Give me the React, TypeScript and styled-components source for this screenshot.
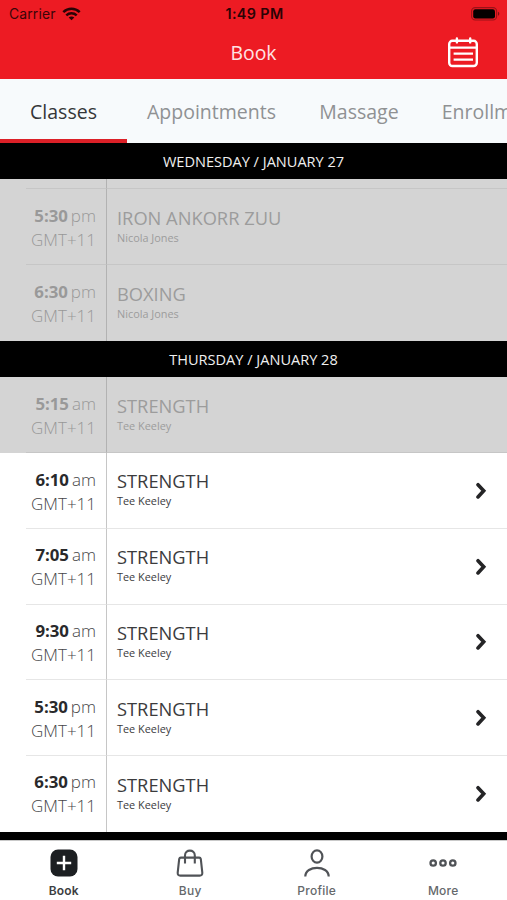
import React from "react";
import styled, { createGlobalStyle } from "styled-components";

const GlobalStyle = createGlobalStyle`
  * { box-sizing: border-box; }
  html, body { margin: 0; padding: 0; background: #fff; }
  body { font-family: "Open Sans", "Noto Sans", sans-serif; overflow: hidden; }
`;

const Screen = styled.div`
  width: 507px;
  height: 900px;
  display: flex;
  flex-direction: column;
  overflow: hidden;
  background: #fff;
`;

const Top = styled.header`
  flex: none;
  height: 79.2px;
  background: #ed1b23;
`;

const StatusBar = styled.div`
  height: 27px;
  padding: 0 7px 0 9px;
  display: grid;
  grid-template-columns: 1fr auto 1fr;
  align-items: center;
  font-family: Inter, sans-serif;
  font-size: 13.9px;
  line-height: 28px;
  color: #3a0508;
`;

const Carrier = styled.div`
  display: flex;
  align-items: center;
  gap: 6px;
  letter-spacing: 0.16px;
`;

const Clock = styled.div`
  font-weight: 600;
  font-size: 14.3px;
  color: #2a0305;
  letter-spacing: 0.4px;
`;

const BatterySlot = styled.div`
  display: flex;
  justify-content: flex-end;
`;

const NavBar = styled.div`
  height: 52px;
  display: grid;
  grid-template-columns: 1fr auto 1fr;
  align-items: center;
  padding: 0 28px;
`;

const NavTitle = styled.h1`
  grid-column: 2;
  margin: 0;
  font-size: 19.4px;
  font-weight: 400;
  line-height: 52px;
  color: #ffe3e3;
`;

const CalendarButton = styled.div`
  display: flex;
  justify-content: flex-end;
`;

const Tabs = styled.nav`
  flex: none;
  height: 63.5px;
  display: flex;
  background: #f7fafc;
  overflow: hidden;
`;

const Tab = styled.div<{ $active?: boolean; $width: number }>`
  flex: none;
  width: ${(p) => p.$width}px;
  height: 63.5px;
  padding-top: 2px;
  line-height: 61px;
  text-align: center;
  font-size: 19.5px;
  color: ${(p) => (p.$active ? "#343638" : "#8f9193")};
  border-bottom: 4px solid ${(p) => (p.$active ? "#dc2027" : "transparent")};
  white-space: nowrap;
`;

const DateBar = styled.div`
  flex: none;
  height: 36.7px;
  background: #000;
  color: #f0f0f0;
  text-align: center;
  font-size: 14.55px;
  line-height: 37px;
`;

const List = styled.main`
  flex: none;
  height: 697px;
  display: flex;
  flex-direction: column;
  background: #000;
  overflow: hidden;
`;

const Row = styled.div<{ $past?: boolean }>`
  flex: none;
  height: 75.7px;
  display: flex;
  padding-left: 26px;
  background: ${(p) => (p.$past ? "#d4d4d4" : "#fff")};
  --line: ${(p) => (p.$past ? "#c6c6c6" : "#e6e6e6")};
  --rule: ${(p) => (p.$past ? "#b2b2b2" : "#c6c6c6")};
  --strong: ${(p) => (p.$past ? "#999" : "#29292b")};
  --text: ${(p) => (p.$past ? "#9c9c9c" : "#3b3b3d")};
  --light: ${(p) => (p.$past ? "#989898" : "#464648")};
`;

const Stub = styled(Row)`
  height: 10px;
`;

const StubTime = styled.div`
  width: 81px;
  border-right: 1px solid var(--rule);
  border-bottom: 1px solid var(--line);
`;

const StubInfo = styled.div`
  flex: 1;
  border-bottom: 1px solid var(--line);
`;

const TimeCell = styled.div<{ $line?: boolean }>`
  width: 81px;
  padding: 14.6px 10px 0 0;
  border-right: 1px solid var(--rule);
  border-bottom: ${(p) => (p.$line ? "1px solid var(--line)" : "none")};
  text-align: right;
  white-space: nowrap;
`;

const TimeLine = styled.div`
  font-size: 17px;
  line-height: 24px;
  font-weight: 300;
  color: var(--light);
  display: flex;
  justify-content: flex-end;
  gap: 3px;
`;

const Hour = styled.span`
  font-weight: 700;
  font-size: 16.8px;
  color: var(--strong);
`;

const Zone = styled.div`
  font-size: 17px;
  line-height: 23px;
  font-weight: 300;
  color: var(--light);
`;

const InfoCell = styled.div<{ $line?: boolean }>`
  flex: 1;
  display: flex;
  align-items: center;
  justify-content: space-between;
  padding: 0 20px 0 10px;
  border-bottom: ${(p) => (p.$line ? "1px solid var(--line)" : "none")};
`;

const Info = styled.div`
  margin-top: -2px;
`;

const Title = styled.div`
  font-size: 18.3px;
  line-height: 24px;
  color: var(--text);
`;

const Teacher = styled.div`
  font-size: 10.9px;
  line-height: 16px;
  color: var(--text);
`;

const TabBar = styled.footer`
  flex: none;
  height: 60.3px;
  display: grid;
  grid-template-columns: repeat(4, 126.5px);
  background: #fff;
  border-top: 1px solid #c9c9c9;
`;

const BarItem = styled.div<{ $active?: boolean }>`
  display: flex;
  flex-direction: column;
  align-items: center;
  padding: 8px 0 0 1px;
  font-family: Inter, sans-serif;
  font-size: 12px;
  font-weight: ${(p) => (p.$active ? 600 : 500)};
  letter-spacing: ${(p) => (p.$active ? 0.1 : 0.25)}px;
  line-height: 16px;
  gap: 6px;
  color: ${(p) => (p.$active ? "#3c3e41" : "#65686b")};
`;

const WifiIcon = () => (
  <svg width="19" height="14" viewBox="0 0 19 14" fill="none" stroke="#2a0305" strokeWidth="2.5">
    <path d="M1.3 5.2C6 .7 13 .7 17.7 5.2" />
    <path d="M4.3 8.4C7.3 5.6 11.7 5.6 14.7 8.4" />
    <path d="M9.5 13.3 6.7 10.5C8.3 9.1 10.7 9.1 12.3 10.5Z" fill="#2a0305" stroke="none" />
  </svg>
);

const BatteryIcon = () => (
  <svg width="29" height="14" viewBox="0 0 29 14">
    <rect x=".6" y=".6" width="25" height="12.4" rx="3.6" fill="none" stroke="#9b1218" strokeWidth="1.1" />
    <rect x="2.2" y="2.2" width="21.8" height="9.2" rx="2.2" fill="#050000" />
    <path d="M27 4.8C28.8 5.5 28.8 8.1 27 8.8Z" fill="#7d0f14" />
  </svg>
);

const CalendarIcon = () => (
  <svg width="32" height="32" viewBox="0 0 32 32" fill="none" stroke="#fff" strokeWidth="2.4" strokeLinecap="round">
    <rect x="2.2" y="3.8" width="27.6" height="25.2" rx="3.2" />
    <path d="M2.5 10.6H29.5M9.9 1.4V5.4M23.2 1.4V5.4" />
    <path d="M6.6 16.6H26M6.6 22.6H26" strokeLinecap="butt" />
  </svg>
);

const Chevron = () => (
  <svg width="11" height="17" viewBox="0 0 11 17" fill="none" stroke="#242426" strokeWidth="3.6">
    <path d="M2 2.7 7.7 8.8 2 14.9" strokeLinecap="round" />
  </svg>
);

const BookIcon = () => (
  <svg width="28" height="28" viewBox="0 0 28 28">
    <rect x=".5" y=".5" width="27" height="27" rx="7.5" fill="#1c1f22" />
    <path d="M14 6.8V21.2M6.8 14H21.2" stroke="#fff" strokeWidth="2.4" />
  </svg>
);

const BagIcon = () => (
  <svg width="28" height="28" viewBox="0 0 28 28" fill="none" stroke="#505357" strokeWidth="2.1">
    <path d="M4.8 8.6H23.2Q24.5 8.6 24.8 10L26.3 23.6Q26.5 26.6 23.7 26.6H4.3Q1.5 26.6 1.7 23.6L3.2 10Q3.5 8.6 4.8 8.6Z" />
    <path d="M9 14.5V6.4C9 0 18.8 0 18.8 6.4V14.5" />
  </svg>
);

const ProfileIcon = () => (
  <svg width="28" height="28" viewBox="0 0 28 28" fill="none" stroke="#505357" strokeWidth="2.2">
    <ellipse cx="14" cy="7.5" rx="5.4" ry="6.2" />
    <path d="M2.3 27.5C2.3 16 25.7 16 25.7 27.5" />
  </svg>
);

const MoreIcon = () => (
  <svg width="28" height="28" viewBox="0 0 28 28" fill="none" stroke="#505357" strokeWidth="2.3">
    <circle cx="4.2" cy="14" r="2.7" />
    <circle cx="14" cy="14" r="2.7" />
    <circle cx="23.8" cy="14" r="2.7" />
  </svg>
);

type Session = { hour: string; half: string; title: string; teacher: string; past?: boolean; last?: boolean };

const wednesday: Session[] = [
  { hour: "5:30", half: "pm", title: "IRON ANKORR ZUU", teacher: "Nicola Jones", past: true },
  { hour: "6:30", half: "pm", title: "BOXING", teacher: "Nicola Jones", past: true, last: true },
];

const thursday: Session[] = [
  { hour: "5:15", half: "am", title: "STRENGTH", teacher: "Tee Keeley", past: true },
  { hour: "6:10", half: "am", title: "STRENGTH", teacher: "Tee Keeley" },
  { hour: "7:05", half: "am", title: "STRENGTH", teacher: "Tee Keeley" },
  { hour: "9:30", half: "am", title: "STRENGTH", teacher: "Tee Keeley" },
  { hour: "5:30", half: "pm", title: "STRENGTH", teacher: "Tee Keeley" },
  { hour: "6:30", half: "pm", title: "STRENGTH", teacher: "Tee Keeley", last: true },
];

const SessionRow = ({ hour, half, title, teacher, past, last }: Session) => (
  <Row $past={past}>
    <TimeCell $line={!last}>
      <TimeLine>
        <Hour>{hour}</Hour>
        <span>{half}</span>
      </TimeLine>
      <Zone>GMT+11</Zone>
    </TimeCell>
    <InfoCell $line={!last}>
      <Info>
        <Title>{title}</Title>
        <Teacher>{teacher}</Teacher>
      </Info>
      {!past && <Chevron />}
    </InfoCell>
  </Row>
);

export default function App() {
  return (
    <Screen>
      <GlobalStyle />
      <Top>
        <StatusBar>
          <Carrier>
            Carrier <WifiIcon />
          </Carrier>
          <Clock>1:49 PM</Clock>
          <BatterySlot>
            <BatteryIcon />
          </BatterySlot>
        </StatusBar>
        <NavBar>
          <NavTitle>Book</NavTitle>
          <CalendarButton>
            <CalendarIcon />
          </CalendarButton>
        </NavBar>
      </Top>
      <Tabs>
        <Tab $active $width={127}>Classes</Tab>
        <Tab $width={169}>Appointments</Tab>
        <Tab $width={126}>Massage</Tab>
        <Tab $width={149}>Enrollments</Tab>
      </Tabs>
      <List>
        <DateBar>WEDNESDAY / JANUARY 27</DateBar>
        <Stub $past>
          <StubTime />
          <StubInfo />
        </Stub>
        {wednesday.map((s) => (
          <SessionRow key={s.hour} {...s} />
        ))}
        <DateBar>THURSDAY / JANUARY 28</DateBar>
        {thursday.map((s) => (
          <SessionRow key={s.hour + s.half} {...s} />
        ))}
      </List>
      <TabBar>
        <BarItem $active>
          <BookIcon />
          Book
        </BarItem>
        <BarItem>
          <BagIcon />
          Buy
        </BarItem>
        <BarItem>
          <ProfileIcon />
          Profile
        </BarItem>
        <BarItem>
          <MoreIcon />
          More
        </BarItem>
      </TabBar>
    </Screen>
  );
}
